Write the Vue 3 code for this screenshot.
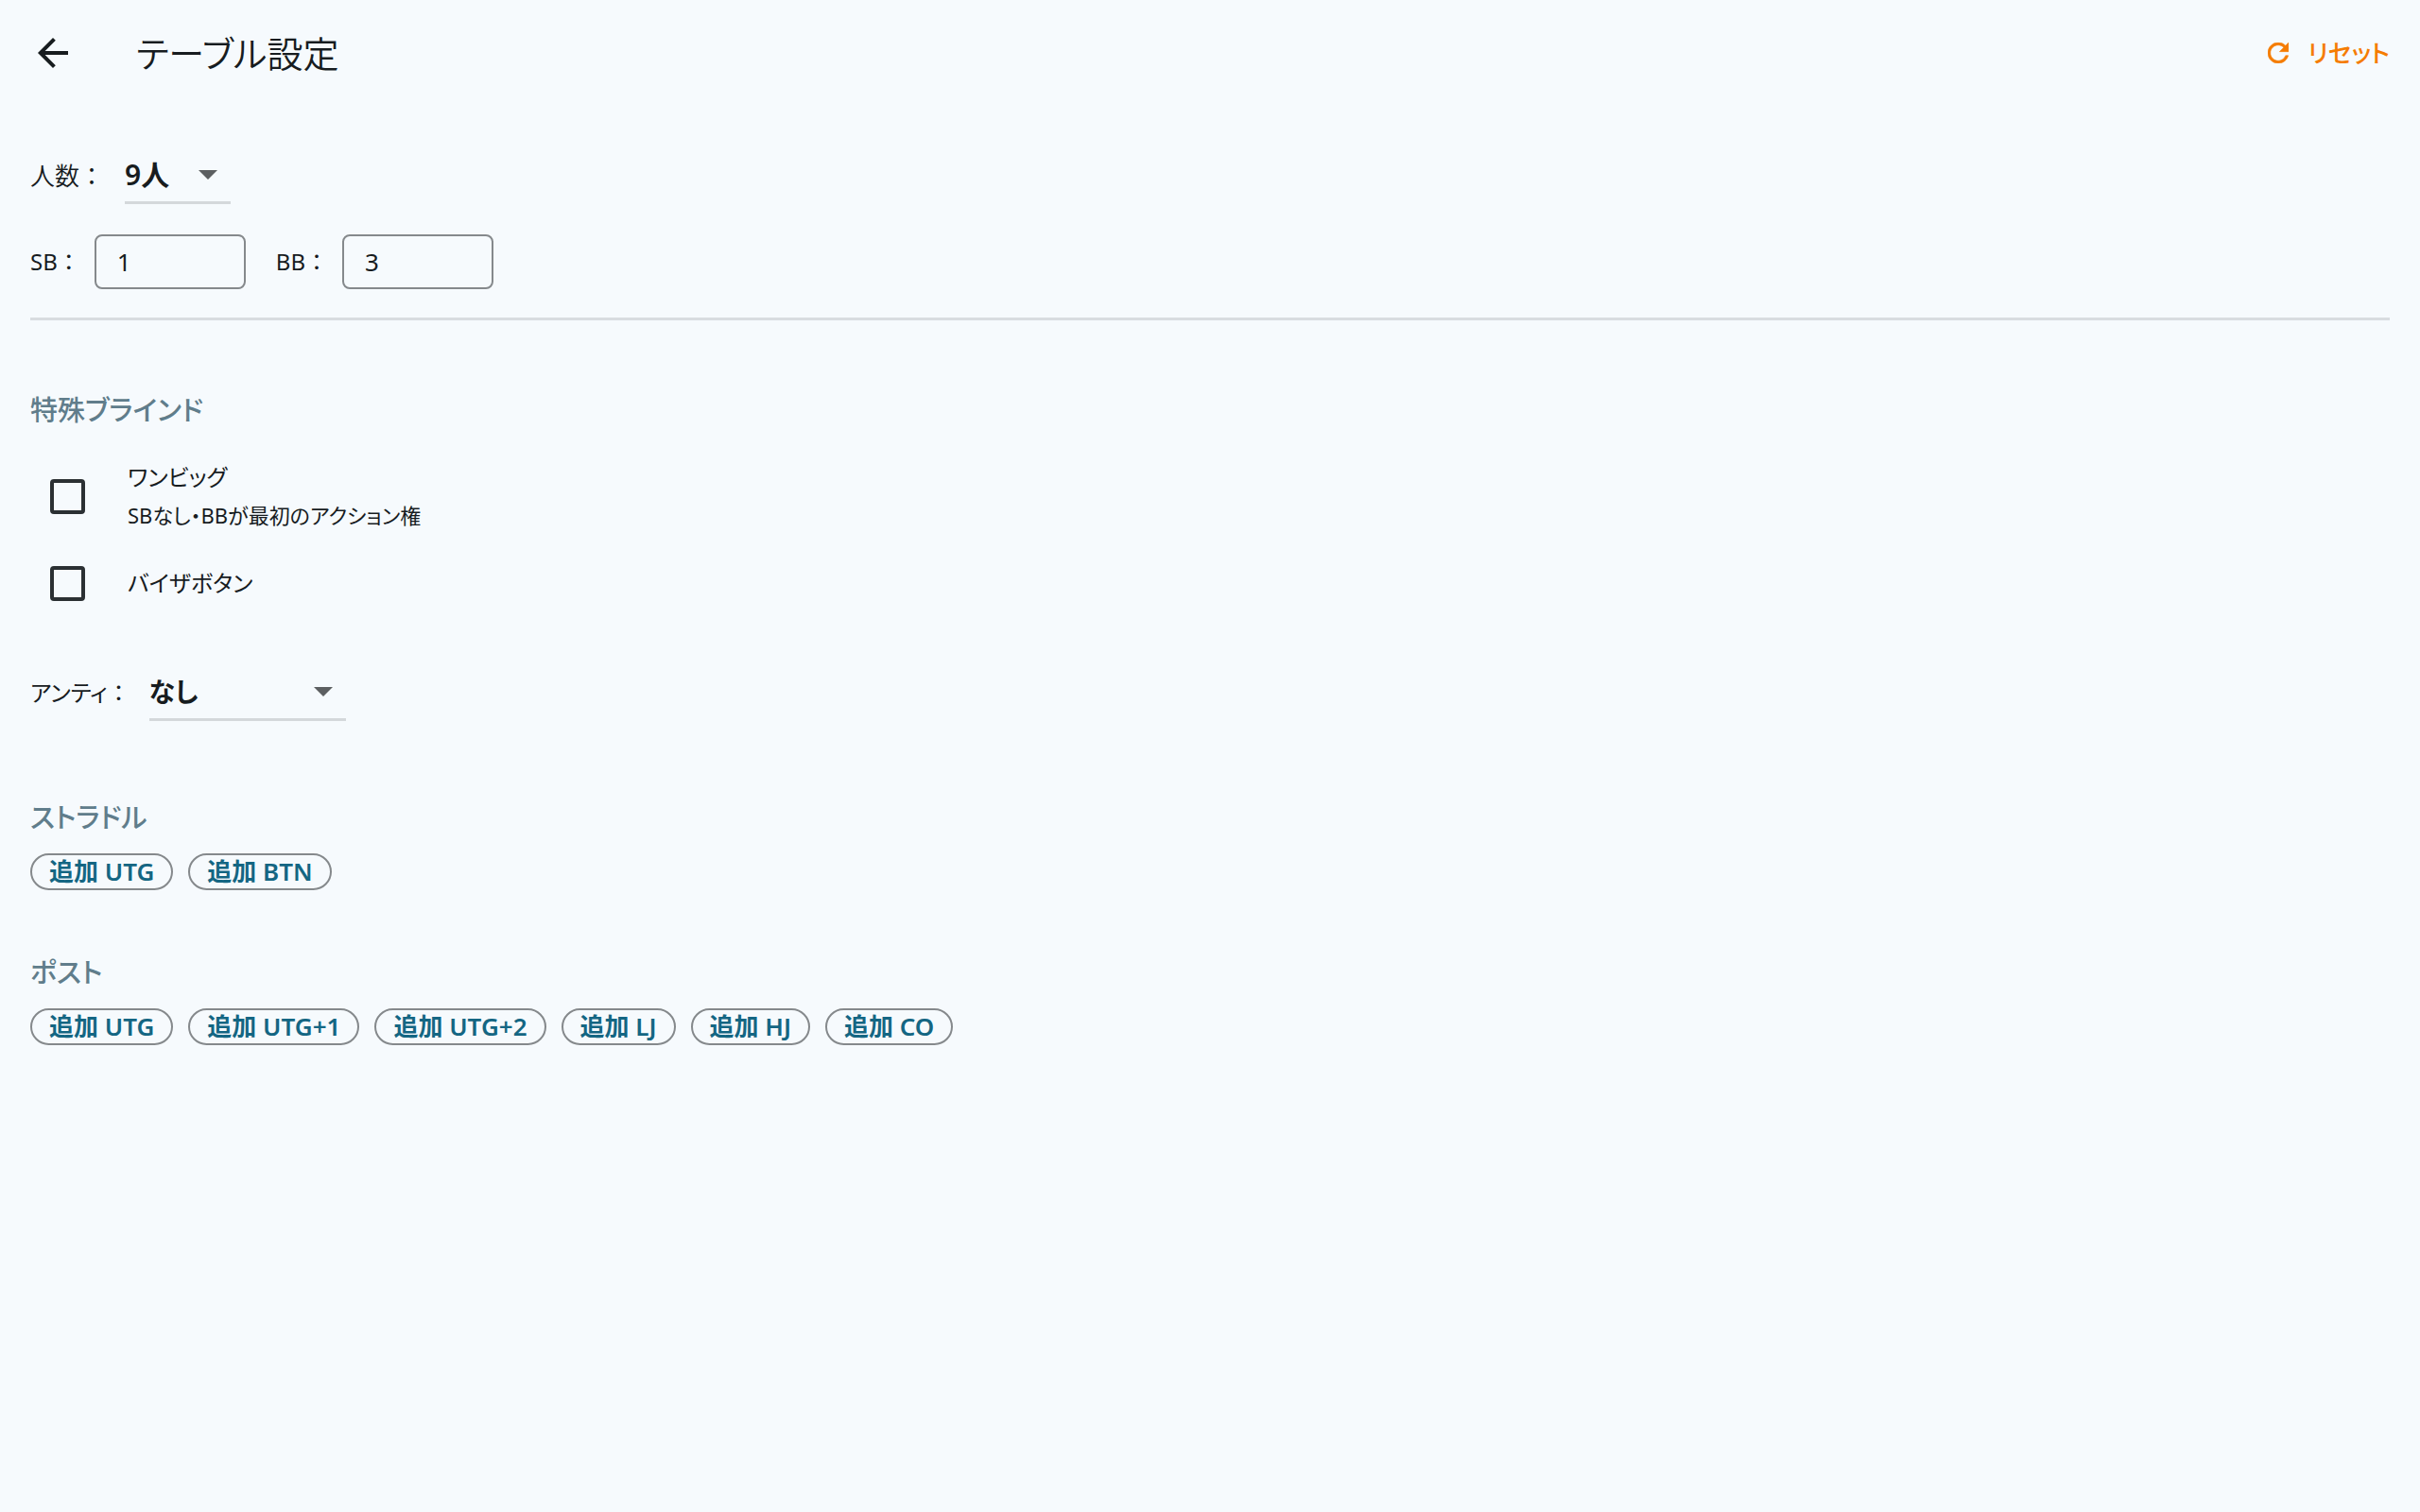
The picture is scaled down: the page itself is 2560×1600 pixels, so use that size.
<script setup>
import { ref } from 'vue'

const players = ref('9人')
const playerOptions = ['2人', '3人', '4人', '5人', '6人', '7人', '8人', '9人']
const sb = ref('1')
const bb = ref('3')
const oneBig = ref(false)
const buyTheButton = ref(false)
const ante = ref('なし')
const anteOptions = ['なし', 'BB']
const straddles = ['UTG', 'BTN']
const posts = ['UTG', 'UTG+1', 'UTG+2', 'LJ', 'HJ', 'CO']
</script>

<template>
  <div class="page">
    <header class="bar">
      <button class="back" type="button" aria-label="戻る">
        <svg viewBox="4 4 16 16" width="32" height="32">
          <path d="M20 11H7.830l5.590-5.590L12 4l-8 8 8 8 1.410-1.410L7.830 13H20v-2z" fill="currentColor" />
        </svg>
      </button>
      <h1>テーブル設定</h1>
      <button class="reset" type="button">
        <svg viewBox="4 4 16 16" width="22" height="22">
          <path d="M17.650 6.350C16.200 4.900 14.210 4 12 4c-4.420 0-7.990 3.580-7.990 8s3.570 8 7.990 8c3.730 0 6.840-2.550 7.730-6h-2.080c-.82 2.330-3.040 4-5.650 4-3.310 0-6-2.690-6-6s2.690-6 6-6c1.660 0 3.140.690 4.220 1.780L13 11h7V4l-2.350 2.350z" fill="currentColor" stroke="currentColor" stroke-width="0.4" />
        </svg>
        <span>リセット</span>
      </button>
    </header>

    <main>
      <div class="row players">
        <label for="players">人数<span class="colon">：</span></label>
        <div class="select small">
          <select id="players" v-model="players">
            <option v-for="p in playerOptions" :key="p">{{ p }}</option>
          </select>
          <i class="caret"></i>
        </div>
      </div>

      <div class="row blinds">
        <label for="sb">SB<span class="colon">：</span></label>
        <input id="sb" v-model="sb" type="text" inputmode="numeric" />
        <label for="bb" class="next">BB<span class="colon">：</span></label>
        <input id="bb" v-model="bb" type="text" inputmode="numeric" />
      </div>

      <hr />

      <section class="special">
        <h2>特殊ブラインド</h2>
        <label class="check tall">
          <input v-model="oneBig" type="checkbox" />
          <span class="text">
            <span class="name">ワンビッグ</span>
            <span class="note">SBなし・BBが最初のアクション権</span>
          </span>
        </label>
        <label class="check">
          <input v-model="buyTheButton" type="checkbox" />
          <span class="text"><span class="name">バイザボタン</span></span>
        </label>
      </section>

      <div class="row ante">
        <label for="ante">アンティ<span class="colon">：</span></label>
        <div class="select wide">
          <select id="ante" v-model="ante">
            <option v-for="a in anteOptions" :key="a">{{ a }}</option>
          </select>
          <i class="caret"></i>
        </div>
      </div>

      <section class="group">
        <h2>ストラドル</h2>
        <div class="chips">
          <button v-for="s in straddles" :key="s" type="button">追加 {{ s }}</button>
        </div>
      </section>

      <section class="group">
        <h2>ポスト</h2>
        <div class="chips">
          <button v-for="p in posts" :key="p" type="button">追加 {{ p }}</button>
        </div>
      </section>
    </main>
  </div>
</template>

<style>
body {
  background: #f6fafd;
}
</style>

<style scoped>
.page {
  box-sizing: border-box;
  min-height: 100vh;
  padding: 0 32px;
  background: #f6fafd;
  color: #171c1f;
  font-family: "Noto Sans", "Noto Sans CJK JP", sans-serif;
  font-feature-settings: "palt";
  font-size: 24px;
  font-weight: 400;
  line-height: 40px;
}
button,
input,
select {
  margin: 0;
  border: 0;
  background: none;
  color: inherit;
  font: inherit;
  font-feature-settings: inherit;
}
button {
  cursor: pointer;
}
h1,
h2 {
  margin: 0;
}
.bar {
  display: flex;
  align-items: center;
  height: 112px;
}
.back {
  display: flex;
  padding: 8px;
}
h1 {
  flex: 1;
  margin-left: 64px;
  font-size: 38px;
  font-weight: 350;
  line-height: 56px;
}
.reset {
  display: flex;
  align-items: center;
  gap: 20px;
  padding: 0;
  color: #f57c00;
  font-size: 26px;
  font-weight: 500;
}
.row {
  display: flex;
  align-items: center;
}
.row label {
  white-space: nowrap;
}
.colon {
  font-feature-settings: normal;
}
.players {
  gap: 22px;
  margin-top: 44px;
  font-size: 26px;
}
.players label {
  font-weight: 350;
}
.select {
  position: relative;
  border-bottom: 3px solid #d4d8db;
}
.select select {
  appearance: none;
  display: block;
  width: 100%;
  height: 57px;
  padding: 0;
  font-size: 28px;
  font-weight: 600;
  outline: none;
}
.select.small select {
  font-size: 30px;
}
.small {
  width: 112px;
}
.wide {
  width: 208px;
}
.caret {
  position: absolute;
  top: 24px;
  right: 14px;
  border: 10px solid transparent;
  border-top-color: #5c5f61;
  border-bottom: 0;
  pointer-events: none;
}
.blinds {
  gap: 15px;
  margin-top: 32px;
}
.blinds input {
  box-sizing: border-box;
  width: 160px;
  height: 58px;
  padding: 0 22px;
  border: 2px solid #85898c;
  border-radius: 8px;
  font-size: 26px;
}
.next {
  margin-left: 17px;
}
hr {
  height: 3px;
  margin: 30px 0 0;
  border: 0;
  background: #d8dce0;
}
h2 {
  color: #607d8b;
  font-size: 29px;
  font-weight: 500;
  line-height: 40px;
}
.special {
  margin-top: 75px;
}
.check {
  display: flex;
  align-items: center;
  height: 80px;
  padding-left: 21px;
}
.tall {
  height: 104px;
  margin-top: 19px;
}
.check input {
  appearance: none;
  width: 37px;
  height: 37px;
  border: 4px solid #2b3033;
  border-radius: 4px;
}
.text {
  display: flex;
  flex-direction: column;
  margin-left: 45px;
}
.note {
  font-size: 22px;
}
.ante {
  gap: 20px;
  margin: 46px 0 82px;
}
.group {
  margin-top: 67px;
}
.chips {
  display: flex;
  flex-wrap: wrap;
  gap: 16px;
  margin-top: 18px;
}
.chips button {
  height: 39px;
  padding: 0 18px;
  border: 2px solid #85898c;
  border-radius: 20px;
  color: #146683;
  font-size: 26px;
  font-weight: 600;
  line-height: 35px;
}
</style>
